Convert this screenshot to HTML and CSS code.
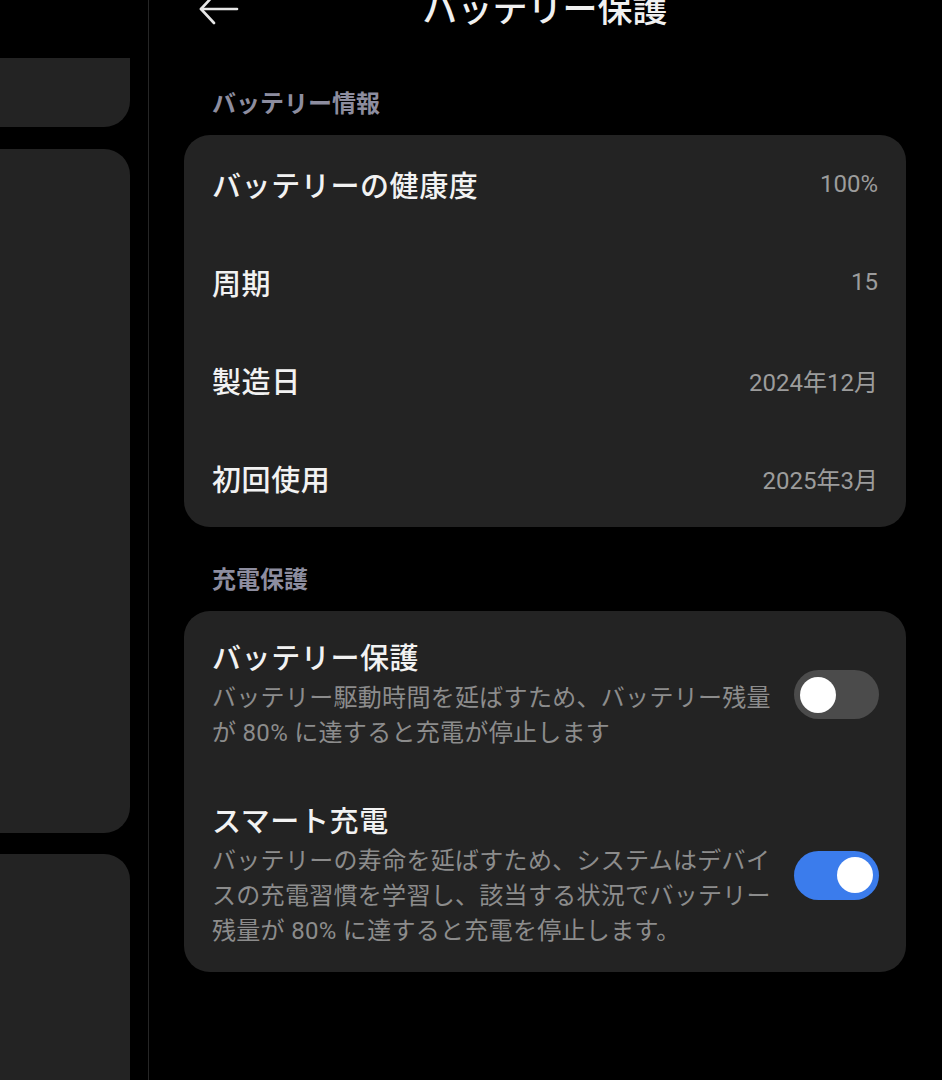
FILE: index.html
```html
<!DOCTYPE html>
<html lang="ja">
<head>
<meta charset="utf-8">
<title>バッテリー保護</title>
<link rel="stylesheet" href="styles.css">
</head>
<body>
<div class="screen">
  <aside class="left">
    <div class="lcard c1"></div>
    <div class="lcard c2"></div>
    <div class="lcard c3"></div>
  </aside>
  <div class="divider"></div>
  <main class="right">
    <header class="header">
      <span class="back">
        <svg width="40" height="32" viewBox="0 0 40 32" fill="none" stroke="#e6e6e6" stroke-width="2.6" stroke-linecap="round" stroke-linejoin="round">
          <path d="M38 16H2"/>
          <path d="M15 2L2 16L15 30"/>
        </svg>
      </span>
      <h1 class="title">バッテリー保護</h1>
      <span></span>
    </header>

    <h2 class="section first">バッテリー情報</h2>
    <div class="card">
      <div class="row"><span class="label">バッテリーの健康度</span><span class="value">100%</span></div>
      <div class="row"><span class="label">周期</span><span class="value">15</span></div>
      <div class="row"><span class="label">製造日</span><span class="value">2024年12月</span></div>
      <div class="row"><span class="label">初回使用</span><span class="value">2025年3月</span></div>
    </div>

    <h2 class="section">充電保護</h2>
    <div class="card">
      <div class="item">
        <div class="text">
          <div class="item-title">バッテリー保護</div>
          <div class="desc">バッテリー駆動時間を延ばすため、バッテリー残量が 80% に達すると充電が停止します</div>
        </div>
        <span class="switch"><span class="knob"></span></span>
      </div>
      <div class="item">
        <div class="text">
          <div class="item-title">スマート充電</div>
          <div class="desc">バッテリーの寿命を延ばすため、システムはデバイスの充電習慣を学習し、該当する状況でバッテリー残量が 80% に達すると充電を停止します。</div>
        </div>
        <span class="switch on"><span class="knob"></span></span>
      </div>
    </div>
  </main>
</div>
</body>
</html>
```

FILE: styles.css
```css
html, body {
  margin: 0;
  padding: 0;
  background: #000;
}
body {
  width: 942px;
  height: 1080px;
  overflow: hidden;
  font-family: Roboto, "Noto Sans CJK JP", sans-serif;
  color: #f2f2f2;
}
.screen {
  display: flex;
  height: 1080px;
  overflow: hidden;
}
.left {
  width: 148px;
  flex: none;
  display: flex;
  flex-direction: column;
  padding-top: 58px;
  box-sizing: border-box;
}
.lcard {
  width: 130px;
  flex: none;
  background: #232323;
}
.c1 {
  height: 69px;
  border-radius: 0 0 26px 0;
}
.c2 {
  margin-top: 22px;
  height: 684px;
  border-radius: 0 26px 26px 0;
}
.c3 {
  margin-top: 21px;
  height: 300px;
  border-radius: 0 26px 0 0;
}
.divider {
  width: 1px;
  flex: none;
  background: #262626;
}
.right {
  flex: 1;
  padding: 0 36px 0 35px;
}
.header {
  display: grid;
  grid-template-columns: 1fr auto 1fr;
  align-items: center;
  height: 50px;
  margin-top: -14px;
}
.back {
  display: flex;
  margin-left: 15px;
  margin-top: -4px;
}
.title {
  margin: 0;
  font-size: 35px;
  font-weight: 500;
  line-height: 50px;
  color: #f0f0f0;
}
.section {
  margin: 38px 0 16px 28px;
  font-size: 24px;
  font-weight: 700;
  line-height: 30px;
  color: #8d8d9f;
}
.section.first {
  margin-top: 53px;
}
.card {
  background: #232323;
  border-radius: 26px;
}
.row {
  display: flex;
  align-items: center;
  justify-content: space-between;
  height: 98px;
  padding: 0 28px;
}
.label {
  font-size: 29px;
  font-weight: 500;
  letter-spacing: 0.6px;
  color: #f2f2f2;
}
.value {
  font-size: 24px;
  color: #9c9c9c;
}
.item {
  display: flex;
  align-items: center;
  gap: 22px;
  padding: 27px 27px 23px 28px;
}
.text {
  flex: 1;
  min-width: 0;
}
.item-title {
  font-size: 29px;
  font-weight: 500;
  letter-spacing: 0.6px;
  line-height: 42px;
  color: #f2f2f2;
}
.desc {
  margin-top: 1px;
  font-size: 24px;
  line-height: 35px;
  letter-spacing: 0.3px;
  color: #8c8c8c;
}
.switch {
  width: 85px;
  height: 49px;
  flex: none;
  box-sizing: border-box;
  padding: 0 6px;
  border-radius: 25px;
  background: #4b4b4b;
  display: flex;
  align-items: center;
}
.switch.on {
  background: #3b7cec;
  justify-content: flex-end;
}
.knob {
  width: 36px;
  height: 36px;
  border-radius: 50%;
  background: #fff;
}
```
